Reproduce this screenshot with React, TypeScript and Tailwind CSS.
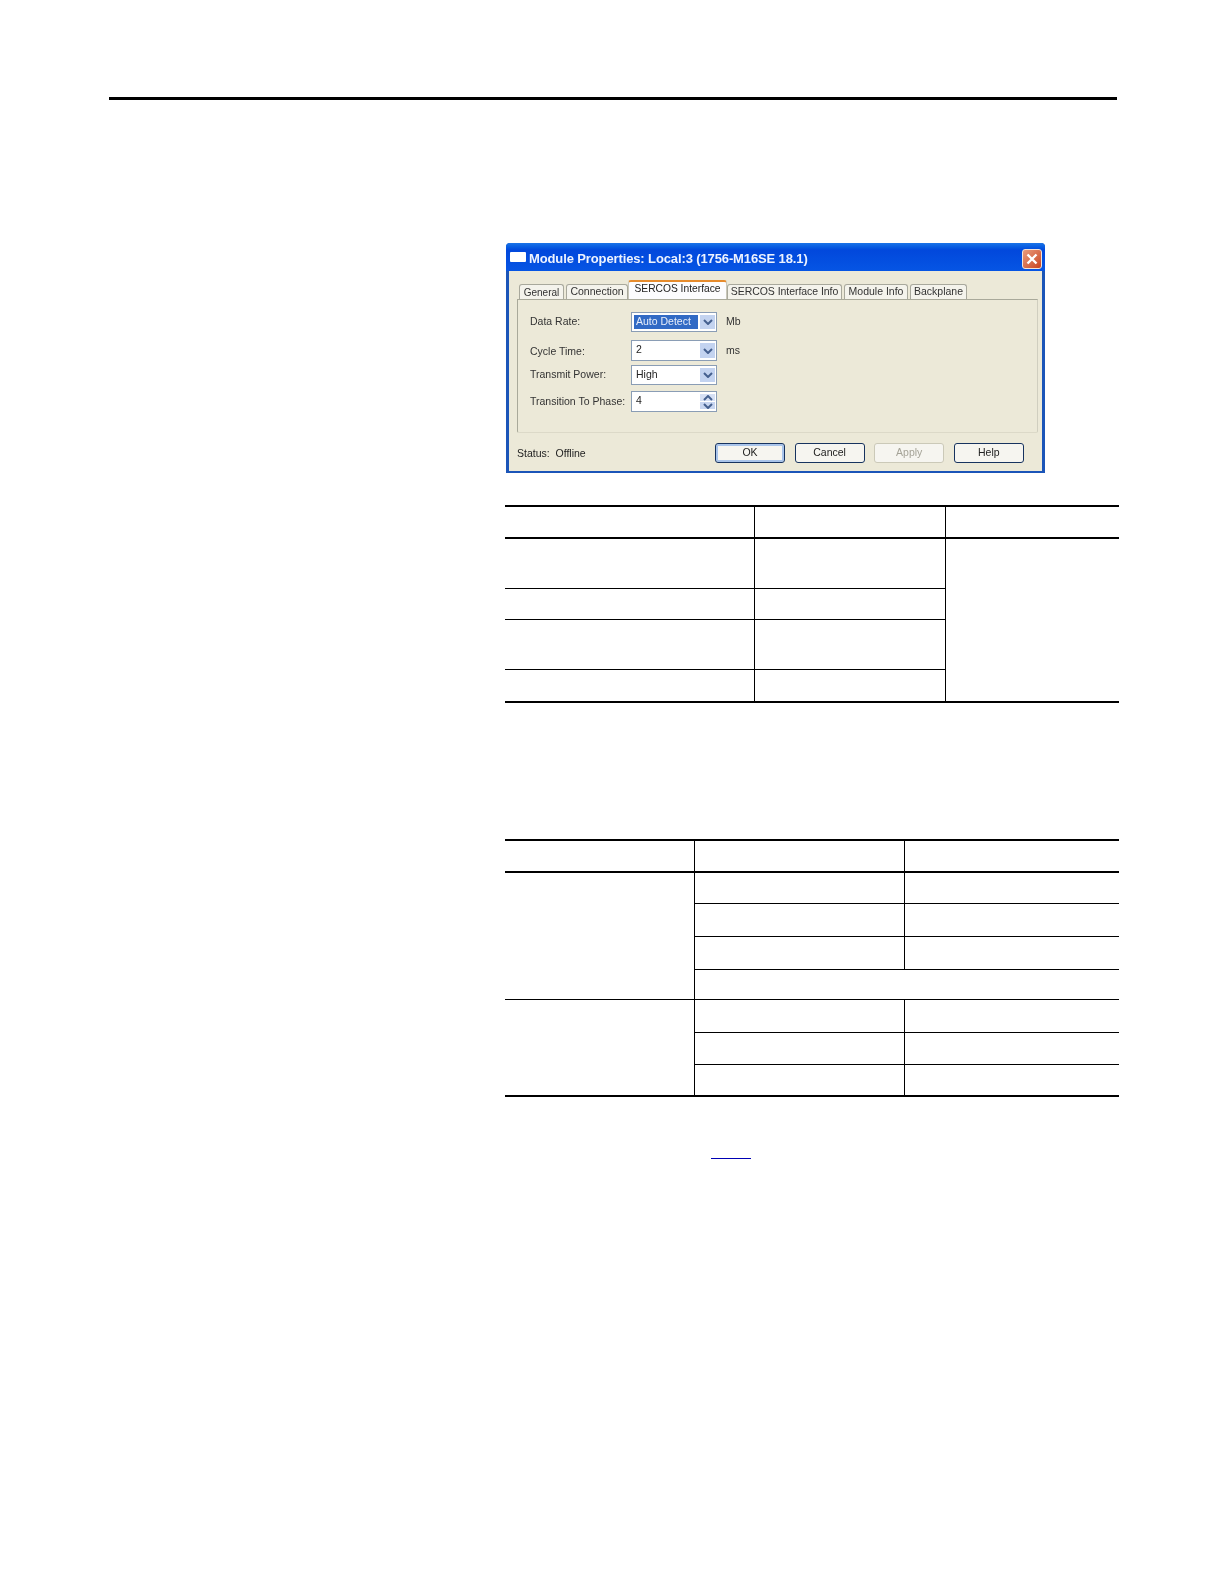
import React from "react";

const line = "border-black";

function Chevron({ up = false }: { up?: boolean }) {
  return (
    <svg width="10" height="6" viewBox="0 0 10 6" className={up ? "rotate-180" : ""}>
      <path d="M1 1 L5 5 L9 1" fill="none" stroke="#45608f" strokeWidth="2" />
    </svg>
  );
}

function Field({
  label,
  value,
  unit,
  selected,
  spin,
  className,
  labelClass = "",
}: {
  label: string;
  value: string;
  unit?: string;
  selected?: boolean;
  spin?: boolean;
  className: string;
  labelClass?: string;
}) {
  return (
    <div className={`flex items-center ${className}`}>
      <div className={`w-[101px] whitespace-nowrap text-[10.5px] text-[#333] ${labelClass}`}>{label}</div>
      <div className="flex h-full w-[86px] items-center border border-[#8a9db5] bg-white py-[2px] pl-[2px] pr-[1px]">
        <div
          className={`flex-1 self-stretch pl-[2px] text-[10.5px] leading-[13px] ${
            selected ? "mr-[2px] bg-[#316ac5] text-[#e8eefa]" : "text-[#222]"
          }`}
        >
          {value}
        </div>
        {spin ? (
          <div className="flex h-full w-[15px] flex-col gap-[1px]">
            <div className="flex flex-1 items-center justify-center bg-[#d6e0f4]">
              <Chevron up />
            </div>
            <div className="flex flex-1 items-center justify-center bg-[#c8d6f1]">
              <Chevron />
            </div>
          </div>
        ) : (
          <div className="flex h-full w-[15px] items-center justify-center bg-[#c3d3f0]">
            <Chevron />
          </div>
        )}
      </div>
      {unit && <div className="ml-[9px] text-[10.5px] text-[#333]">{unit}</div>}
    </div>
  );
}

function Tab({ label, className }: { label: string; className: string }) {
  return (
    <div
      className={`flex h-[15px] items-center justify-center whitespace-nowrap rounded-t-[3px] border border-b-0 border-[#a8a89c] bg-[#f4f3ec] text-[10.5px] text-[#333] ${className}`}
    >
      {label}
    </div>
  );
}

function Btn({ label, className = "" }: { label: string; className?: string }) {
  return (
    <button className={`h-[20px] w-[70px] rounded-[3px] border border-[#17335f] bg-[#f6f5f0] text-[10.5px] text-[#222] ${className}`}>
      {label}
    </button>
  );
}

function Dialog() {
  return (
    <div className="ml-[1px] h-[230px] w-[539px] rounded-t-[4px] bg-[#1b55b8] blur-[0.25px]">
      <div className="flex h-[28px] items-center rounded-t-[4px] bg-gradient-to-b from-[#1a74e8] via-[#0248dc] via-25% to-[#0655e4] pl-[4px] pr-[3px]">
        <div className="h-[10px] w-[16px] rounded-[1px] bg-white" />
        <div className="ml-[3px] flex-1 whitespace-nowrap pt-[3px] text-[13px] font-bold tracking-[-0.12px] text-[#eef3ff]">
          Module Properties: Local:3 (1756-M16SE 18.1)
        </div>
        <div className="mt-[4px] flex h-[20px] w-[20px] items-center justify-center rounded-[3px] border border-[#f3e3d8] bg-gradient-to-br from-[#e89b7c] to-[#c8421c]">
          <svg width="12" height="12" viewBox="0 0 12 12">
            <path d="M1.5 1.5 L10.5 10.5 M10.5 1.5 L1.5 10.5" stroke="#fff" strokeWidth="2.4" />
          </svg>
        </div>
      </div>
      <div className="mx-[3px] h-[200px] bg-[#ece9d8] pl-[8px] pr-[4px] pt-[9px]">
        <div className="flex h-[19px] items-end pl-[2px]">
          <Tab label="General" className="w-[45px] text-[10px]" />
          <Tab label="Connection" className="ml-[2px] w-[62px]" />
          <div className="flex h-[19px] w-[99px] items-center justify-center whitespace-nowrap rounded-t-[3px] border-x border-t-2 border-x-[#c9c7ba] border-t-[#e68b2c] bg-[#fcfcfe] pb-[3px] text-[10.25px] text-[#222]">
            SERCOS Interface
          </div>
          <Tab label="SERCOS Interface Info" className="w-[115px] tracking-[-0.05px]" />
          <Tab label="Module Info" className="ml-[2px] w-[64px]" />
          <Tab label="Backplane" className="ml-[2px] w-[57px]" />
        </div>
        <div className="h-[134px] rounded-b-[2px] border border-[#a9a99a] border-r-[#d0cebf] border-b-[#dcd9c8] px-[12px] pt-[12px]">
          <Field label="Data Rate:" value="Auto Detect" unit="Mb" selected className="h-[20px]" />
          <Field label="Cycle Time:" value="2" unit="ms" labelClass="pt-[3px]" className="mt-[8px] h-[21px]" />
          <Field label="Transmit Power:" value="High" className="mt-[4px] h-[20px]" />
          <Field label="Transition To Phase:" value="4" spin className="mt-[6px] h-[21px]" />
        </div>
        <div className="mt-[10px] flex items-center">
          <div className="w-[198px] pt-[2px] text-[10.5px] text-[#222]">Status:&nbsp; Offline</div>
          <div className="flex gap-[9.6px]">
            <Btn label="OK" className="border-[#1c4f94] shadow-[inset_0_0_0_2px_#a9c4ea]" />
            <Btn label="Cancel" />
            <Btn label="Apply" className="border-[#cbc9b8] text-[#a5a397]" />
            <Btn label="Help" />
          </div>
        </div>
      </div>
    </div>
  );
}

function TableOne() {
  const rows = ["h-[50px]", "h-[31px]", "h-[50px]", "h-[33px]"];
  return (
    <table className="mt-[32px] w-[614px] table-fixed border-separate border-spacing-0">
      <colgroup>
        <col className="w-[250px]" />
        <col className="w-[191px]" />
        <col />
      </colgroup>
      <thead>
        <tr className="h-[34px]">
          <th className={`border-y-2 border-r ${line}`} />
          <th className={`border-y-2 border-r ${line}`} />
          <th className={`border-y-2 ${line}`} />
        </tr>
      </thead>
      <tbody>
        {rows.map((h, i) => {
          const b = i === 3 ? "border-b-2" : "border-b";
          return (
            <tr key={i} className={h}>
              <td className={`${b} border-r ${line}`} />
              <td className={`${b} border-r ${line}`} />
              {i === 0 && <td rowSpan={4} className={`border-b-2 ${line}`} />}
            </tr>
          );
        })}
      </tbody>
    </table>
  );
}

function TableTwo() {
  return (
    <table className="mt-[136px] w-[614px] table-fixed border-separate border-spacing-0">
      <colgroup>
        <col className="w-[190px]" />
        <col className="w-[210px]" />
        <col />
      </colgroup>
      <thead>
        <tr className="h-[34px]">
          <th className={`border-y-2 border-r ${line}`} />
          <th className={`border-y-2 border-r ${line}`} />
          <th className={`border-y-2 ${line}`} />
        </tr>
      </thead>
      <tbody>
        <tr className="h-[31px]">
          <td rowSpan={4} className={`border-r border-b ${line}`} />
          <td className={`border-r border-b ${line}`} />
          <td className={`border-b ${line}`} />
        </tr>
        <tr className="h-[33px]">
          <td className={`border-r border-b ${line}`} />
          <td className={`border-b ${line}`} />
        </tr>
        <tr className="h-[33px]">
          <td className={`border-r border-b ${line}`} />
          <td className={`border-b ${line}`} />
        </tr>
        <tr className="h-[30px]">
          <td colSpan={2} className={`border-b ${line}`} />
        </tr>
        <tr className="h-[33px]">
          <td rowSpan={3} className={`border-r border-b-2 ${line}`} />
          <td className={`border-r border-b ${line}`} />
          <td className={`border-b ${line}`} />
        </tr>
        <tr className="h-[32px]">
          <td className={`border-r border-b ${line}`} />
          <td className={`border-b ${line}`} />
        </tr>
        <tr className="h-[32px]">
          <td className={`border-r border-b-2 ${line}`} />
          <td className={`border-b-2 ${line}`} />
        </tr>
      </tbody>
    </table>
  );
}

export default function App() {
  return (
    <div className="h-[1584px] w-[1224px] bg-white pt-[97px] font-['Liberation_Sans',Arial,sans-serif]">
      <div className="ml-[109px] h-[3px] w-[1008px] bg-black" />
      <div className="ml-[505px] w-[614px] pt-[143px]">
        <Dialog />
        <TableOne />
        <TableTwo />
        <div className="ml-[206px] mt-[61px] h-[1px] w-[40px] bg-[#0000b4]" />
      </div>
    </div>
  );
}
